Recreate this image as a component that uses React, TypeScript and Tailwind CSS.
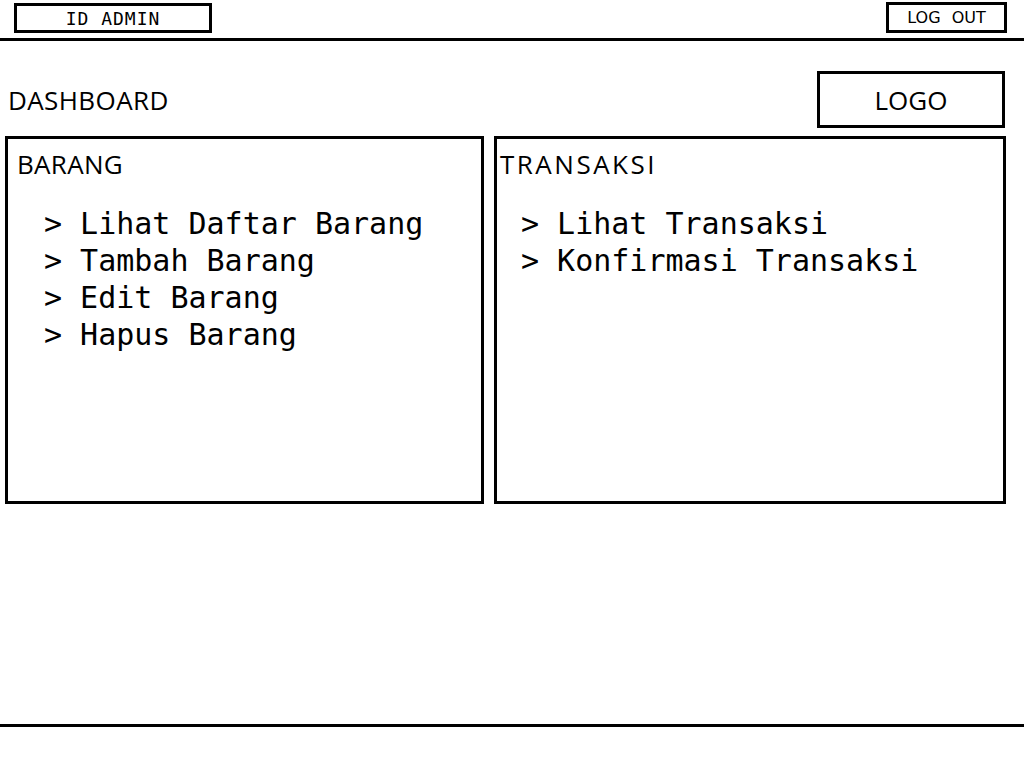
import React from "react";

const barangMenu = [
  "Lihat Daftar Barang",
  "Tambah Barang",
  "Edit Barang",
  "Hapus Barang",
];

const transaksiMenu = ["Lihat Transaksi", "Konfirmasi Transaksi"];

function MenuList({ items }: { items: string[] }) {
  return (
    <ul className="font-['DejaVu_Sans_Mono',monospace] text-[30px] leading-[37px] whitespace-pre">
      {items.map((item) => (
        <li key={item}>{"> " + item}</li>
      ))}
    </ul>
  );
}

export default function App() {
  return (
    <div className="h-[768px] flex flex-col bg-white text-black font-['Open_Sans',sans-serif]">
      {/* top bar */}
      <header className="h-[41px] border-b-[3px] border-black flex justify-between items-start pl-[14px] pr-[17px]">
        <div className="mt-[3px] w-[198px] h-[30px] border-[3px] border-black flex items-center justify-center font-['DejaVu_Sans_Mono',monospace] text-[18px] tracking-[1px]">
          ID ADMIN
        </div>
        <div className="mt-[2px] w-[121px] h-[31px] border-[3px] border-black flex items-center justify-center font-['DejaVu_Sans',sans-serif] text-[16px] [word-spacing:6px]">
          LOG OUT
        </div>
      </header>

      {/* title row */}
      <div className="h-[95px] flex justify-between items-start pt-[30px] pl-[8px] pr-[19px]">
        <h1 className="mt-[16px] text-[26px] leading-none tracking-[0.4px]">DASHBOARD</h1>
        <div className="w-[188px] h-[57px] border-[3px] border-black flex items-center justify-center text-[26px] leading-none">
          LOGO
        </div>
      </div>

      {/* panels */}
      <div className="h-[368px] flex gap-[10px] pl-[5px]">
        <section className="w-[479px] border-[3px] border-black pt-[12px] pl-[9px]">
          <h2 className="text-[26px] leading-none tracking-[0.3px]">BARANG</h2>
          <div className="mt-[28px] ml-[27px]">
            <MenuList items={barangMenu} />
          </div>
        </section>
        <section className="w-[512px] border-[3px] border-black pt-[12px] pl-[3px]">
          <h2 className="text-[26px] leading-none tracking-[2.5px]">TRANSAKSI</h2>
          <div className="mt-[28px] ml-[21px]">
            <MenuList items={transaksiMenu} />
          </div>
        </section>
      </div>

      <div className="flex-1" />

      {/* footer line */}
      <footer className="h-[44px] border-t-[3px] border-black" />
    </div>
  );
}
